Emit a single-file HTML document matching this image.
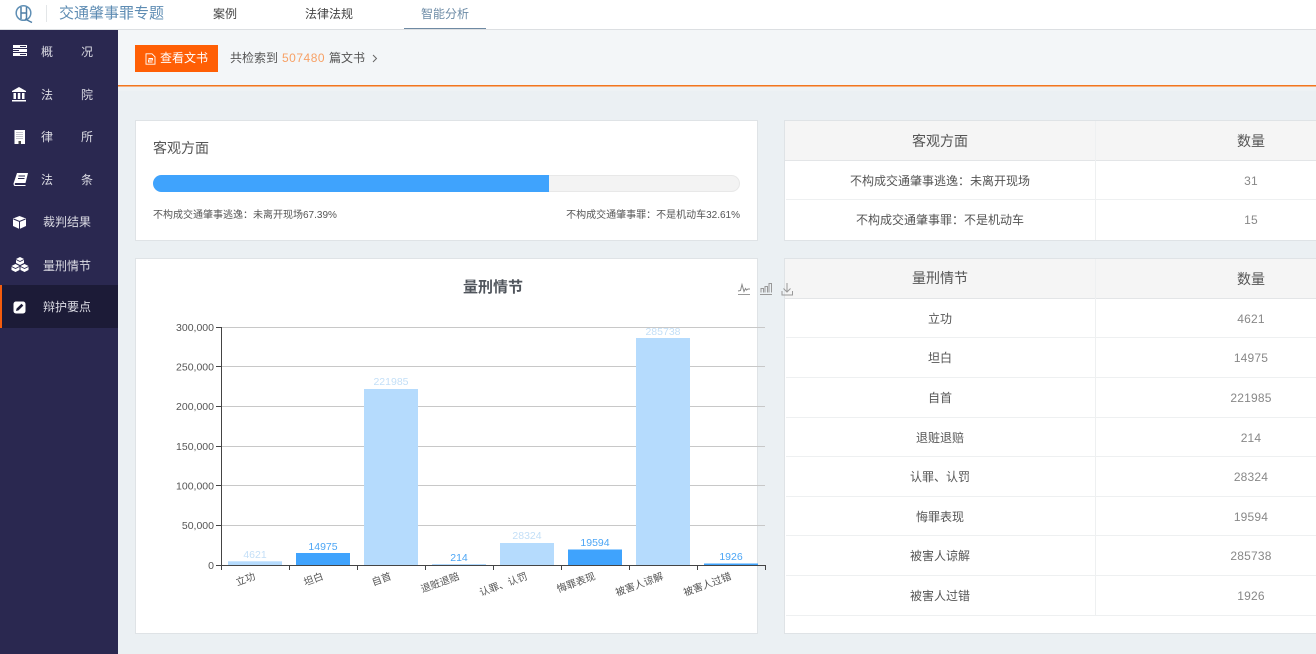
<!DOCTYPE html>
<html lang="zh"><head><meta charset="utf-8">
<style>
*{box-sizing:border-box;margin:0;padding:0}
html,body{width:1316px;height:654px;overflow:hidden;background:#ebf0f3;font-family:"Liberation Sans","Noto Sans CJK SC",sans-serif;color:#444}
.a{position:absolute;white-space:nowrap}
#page{position:relative;width:1316px;height:654px;overflow:hidden}
.nav{font-size:12px;top:6px;line-height:16px;color:#444}
.side{left:0;width:118px;height:43px;color:#dcdce4;font-size:12px}
.side svg{position:absolute;left:11px;top:12px}
.side span{position:absolute;top:13px;line-height:17px;white-space:nowrap}
.panel{background:#fff;border:1px solid #dfe3e6}
.cell{position:absolute;text-align:center;font-size:12px;line-height:16px;color:#555;white-space:nowrap}
.n{color:#888;letter-spacing:.2px}
.hd{font-size:14px;color:#555}
.line{position:absolute;height:1px;background:#eef0f1;left:786px;width:530px}
</style></head><body><div id="page">

<div class="a" style="left:0;top:0;width:1316px;height:30px;background:#fff;border-bottom:1px solid #dcdfe2"></div>
<svg class="a" style="left:14px;top:4px" width="22" height="20" viewBox="0 0 22 20"><circle cx="9.500" cy="9" r="7.300" fill="none" stroke="#5f8fb5" stroke-width="1.500"/><path d="M7 3v12M7 9h5.500M12.500 3v12M11 15l7 3.500" fill="none" stroke="#4f7ea6" stroke-width="1.500"/></svg>
<div class="a" style="left:46px;top:5px;width:1px;height:17px;background:#e3e6e8"></div>
<div class="a" style="left:59px;top:4px;font-size:15px;line-height:20px;color:#5e8cb3">交通肇事罪专题</div>
<div class="a nav" style="left:213px">案例</div>
<div class="a nav" style="left:305px">法律法规</div>
<div class="a nav" style="left:421px;color:#6c8ba6">智能分析</div>
<div class="a" style="left:404px;top:28px;width:82px;height:1px;background:#6f8aa3"></div>

<div class="a" style="left:0;top:30px;width:118px;height:624px;background:#2a2850"></div>
<div class="a side" style="top:30px"><svg style="top:14px" width="16" height="14" viewBox="0 0 16 14"><path d="M2 1h14v3H2zM2 5h14v3H2zM2 9h14v3H2z" fill="#fff"/><path d="M9 2.500h6M2 6.500h6M9 10.500h6" stroke="#2a2850"/></svg><span style="left:41px;top:14px">概</span><span style="left:81px;top:14px">况</span></div>
<div class="a side" style="top:73px"><svg style="top:13px" width="16" height="16" viewBox="0 0 16 16"><path d="M8 1L1 5v1h14V5zM2.500 7h2.500v6H2.500zM6.800 7h2.500v6H6.800zM11 7h2.500v6H11zM1 14h14v1.500H1z" fill="#fff"/></svg><span style="left:41px;top:14px">法</span><span style="left:81px;top:14px">院</span></div>
<div class="a side" style="top:116px"><svg style="left:14px;top:14px" width="12" height="15" viewBox="0 0 12 15"><path d="M.5 0h10.500v14H.5z" fill="#fff"/><path d="M2.500 2.500h6.500M2.500 4.500h6.500M2.500 6.500h6.500M2.500 8.500h6.500" stroke="#8a8a9a" stroke-dasharray="1 1"/><path d="M4.500 11h2.500v3H4.500z" fill="#444"/></svg><span style="left:41px">律</span><span style="left:81px">所</span></div>
<div class="a side" style="top:159px"><svg style="left:13px;top:13px" width="16" height="14" viewBox="0 0 16 14"><path d="M4 1h11l-2.500 10H2.500C1.500 11 1.500 13 2.500 13h10v1H2C1 14 .5 13 .5 11.500z" fill="#fff"/><path d="M5.500 4h6.500M5 6.500h6.500" stroke="#2a2850"/></svg><span style="left:41px">法</span><span style="left:81px">条</span></div>
<div class="a side" style="top:202px"><svg style="left:12px;top:13px" width="15" height="15" viewBox="0 0 15 15"><path d="M7.500 1L14 3.500v7.500L7.500 14 1 11V3.500z" fill="#fff"/><path d="M1.500 4L7.500 6.500 13.500 4M7.500 6.500V14" fill="none" stroke="#2a2850"/></svg><span style="left:43px;top:12px">裁判结果</span></div>
<div class="a side" style="top:245px"><svg width="18" height="15" viewBox="0 0 18 15" style="left:11px;top:12px"><g fill="#fff"><path d="M9 0l4 2v4l-4 2-4-2V2z"/><path d="M4.500 7l4 2v4l-4 2L.5 13V9z"/><path d="M13.500 7l4 2v4l-4 2-4-2V9z"/></g><path d="M5 2.500l4 2 4-2M.5 9.500l4 2 4-2M9.500 9.500l4 2 4-2" fill="none" stroke="#2a2850" stroke-width=".8"/></svg><span style="left:43px">量刑情节</span></div>
<div class="a" style="left:0;top:285px;width:118px;height:43px;background:#1c1b37"></div>
<div class="a" style="left:0;top:285px;width:2px;height:43px;background:#f45c0e"></div>
<div class="a side" style="top:285px"><svg style="left:13px;top:16px" width="13" height="13" viewBox="0 0 13 13"><rect x=".5" y=".5" width="12" height="12" rx="2.500" fill="#fff"/><path d="M3 10l.6-2.500L8.500 2.800l1.800 1.800L5.500 9.400z" fill="#1c1b37"/></svg><span style="left:43px;top:14px">辩护要点</span></div>

<div class="a" style="left:118px;top:30px;width:1198px;height:55px;background:#f3f6f8"></div>
<div class="a" style="left:118px;top:87px;width:1198px;height:4px;background:#eef2f4"></div>
<div class="a" style="left:118px;top:85px;width:1198px;height:1px;background:#f2761f"></div>
<div class="a" style="left:118px;top:86px;width:1198px;height:1px;background:#f3b183"></div>
<div class="a" style="left:135px;top:45px;width:83px;height:27px;background:#ff5f05"></div>
<svg class="a" style="left:145px;top:53px" width="11" height="12" viewBox="0 0 11 12"><path d="M1 .8h6l3 3V11.200H1zM3.500 5.500h4v1.500h-4v2h4" fill="none" stroke="#fff" stroke-width=".9"/></svg>
<div class="a" style="left:160px;top:50px;font-size:12px;line-height:17px;color:#fff">查看文书</div>
<div class="a" style="left:230px;top:50px;font-size:12px;line-height:16px;color:#555">共检索到</div>
<div class="a" style="left:282px;top:50px;font-size:12px;line-height:16px;color:#f7a166;letter-spacing:.5px">507480</div>
<div class="a" style="left:329px;top:50px;font-size:12px;line-height:16px;color:#555">篇文书</div>
<svg class="a" style="left:371px;top:53px" width="8" height="11" viewBox="0 0 8 11"><path d="M2 2l3.500 3.500L2 9" fill="none" stroke="#666"/></svg>

<div class="a panel" style="left:135px;top:120px;width:623px;height:121px"></div>
<div class="a" style="left:153px;top:139px;font-size:14px;line-height:18px;color:#555">客观方面</div>
<div class="a" style="left:153px;top:175px;width:587px;height:17px;border-radius:9px;background:#f3f3f3;border:1px solid #e8e8e8"></div>
<div class="a" style="left:153px;top:175px;width:396px;height:17px;border-radius:9px 0 0 9px;background:#3fa3fd"></div>
<div class="a" style="left:153px;top:209px;font-size:10px;line-height:14px;color:#555">不构成交通肇事逃逸：未离开现场67.39%</div>
<div class="a" style="right:576px;top:209px;font-size:10px;line-height:14px;color:#555">不构成交通肇事罪：不是机动车32.61%</div>

<div class="a panel" style="left:135px;top:258px;width:623px;height:376px"></div>

<div class="a panel" style="left:784px;top:120px;width:540px;height:121px"></div>
<div class="a" style="left:785px;top:121px;width:531px;height:40px;background:#f5f5f5;border-bottom:1px solid #e3e5e7"></div>
<div class="a" style="left:1095px;top:121px;width:1px;height:119px;background:#eef0f1"></div>
<div class="line" style="top:199px"></div>
<div class="cell hd" style="left:785px;width:310px;top:132px;line-height:18px">客观方面</div>
<div class="cell hd" style="left:1096px;width:310px;top:132px;line-height:18px">数量</div>
<div class="cell" style="left:785px;width:310px;top:173px">不构成交通肇事逃逸：未离开现场</div>
<div class="cell n" style="left:1096px;width:310px;top:173px">31</div>
<div class="cell" style="left:785px;width:310px;top:212px">不构成交通肇事罪：不是机动车</div>
<div class="cell n" style="left:1096px;width:310px;top:212px">15</div>

<div class="a panel" style="left:784px;top:258px;width:540px;height:376px"></div>
<div class="a" style="left:785px;top:259px;width:531px;height:40px;background:#f5f5f5;border-bottom:1px solid #e3e5e7"></div>
<div class="a" style="left:1095px;top:259px;width:1px;height:356px;background:#eef0f1"></div>
<div class="line" style="top:337px"></div><div class="line" style="top:377px"></div><div class="line" style="top:417px"></div><div class="line" style="top:456px"></div><div class="line" style="top:496px"></div><div class="line" style="top:535px"></div><div class="line" style="top:575px"></div><div class="line" style="top:615px"></div>
<div class="cell hd" style="left:785px;width:310px;top:269px;line-height:18px">量刑情节</div>
<div class="cell hd" style="left:1096px;width:310px;top:270px;line-height:18px">数量</div>
<div class="cell" style="left:785px;width:310px;top:311px">立功</div><div class="cell n" style="left:1096px;width:310px;top:311px">4621</div>
<div class="cell" style="left:785px;width:310px;top:350px">坦白</div><div class="cell n" style="left:1096px;width:310px;top:350px">14975</div>
<div class="cell" style="left:785px;width:310px;top:390px">自首</div><div class="cell n" style="left:1096px;width:310px;top:390px">221985</div>
<div class="cell" style="left:785px;width:310px;top:430px">退赃退赔</div><div class="cell n" style="left:1096px;width:310px;top:430px">214</div>
<div class="cell" style="left:785px;width:310px;top:469px">认罪、认罚</div><div class="cell n" style="left:1096px;width:310px;top:469px">28324</div>
<div class="cell" style="left:785px;width:310px;top:509px">悔罪表现</div><div class="cell n" style="left:1096px;width:310px;top:509px">19594</div>
<div class="cell" style="left:785px;width:310px;top:548px">被害人谅解</div><div class="cell n" style="left:1096px;width:310px;top:548px">285738</div>
<div class="cell" style="left:785px;width:310px;top:588px">被害人过错</div><div class="cell n" style="left:1096px;width:310px;top:588px">1926</div>

<svg class="a" style="left:135px;top:258px;overflow:visible;z-index:5" width="680" height="376" viewBox="135 258 680 376" font-family="Liberation Sans,Noto Sans CJK SC,sans-serif">
<text x="493" y="292" text-anchor="middle" font-size="15" font-weight="700" fill="#50555c">量刑情节</text>
<g fill="none" stroke="#888" stroke-width="1"><path d="M738 294.500h12" stroke="#999"/><path d="M738 291l2.500-.5 1.500-6 2 7 1.500-3 1 1.500 1.500-1h2"/><path d="M760 294.500h12M761 292.500v-4h2.500v4M765 292.500v-6h2.500v6M769 292.500v-9h2.500v9" stroke="#999"/><path d="M787 283v9M783.500 288.500l3.500 3.500 3.500-3.500M782 291v4h10.500v-4" stroke="#999"/></g>
<g stroke="#c8c8c8"><path d="M222 327.500h543M222 366.500h543M222 406.500h543M222 446.500h543M222 485.500h543M222 525.500h543"/></g>
<g fill="#b5dbfd"><rect x="228" y="561.300" width="54" height="3.700"/><rect x="364" y="389" width="54" height="176"/><rect x="500" y="543" width="54" height="22"/><rect x="636" y="338" width="54" height="227"/></g>
<g fill="#3fa3fd"><rect x="296" y="553" width="54" height="12"/><rect x="432" y="564.600" width="54" height=".7"/><rect x="568" y="549.500" width="54" height="15.500"/><rect x="704" y="563.500" width="54" height="1.500"/></g>
<g stroke="#444" fill="none"><path d="M221.500 327v238.500M216 327.500h6M216 366.500h6M216 406.500h6M216 446.500h6M216 485.500h6M216 525.500h6M216 565.500h549.500"/><path d="M221.500 565v5M289.500 565v5M357.500 565v5M425.500 565v5M493.500 565v5M561.500 565v5M629.500 565v5M697.500 565v5M765.500 565v5"/></g>
<g font-size="10.500" fill="#555" text-anchor="end"><text x="214" y="331">300,000</text><text x="214" y="370.500">250,000</text><text x="214" y="410">200,000</text><text x="214" y="450">150,000</text><text x="214" y="489.500">100,000</text><text x="214" y="529">50,000</text><text x="214" y="569">0</text></g>
<g font-size="10.500" text-anchor="middle"><g fill="#c3dff7"><text x="255" y="558">4621</text><text x="391" y="385">221985</text><text x="527" y="539">28324</text><text x="663" y="335">285738</text></g><g fill="#4ba5f5"><text x="323" y="550">14975</text><text x="459" y="561">214</text><text x="595" y="546">19594</text><text x="731" y="560">1926</text></g></g>
<g font-size="10" fill="#555" text-anchor="end"><text transform="translate(256 579) rotate(-20)">立功</text><text transform="translate(324 579) rotate(-20)">坦白</text><text transform="translate(392 579) rotate(-20)">自首</text><text transform="translate(460 579) rotate(-20)">退赃退赔</text><text transform="translate(528 579) rotate(-20)">认罪、认罚</text><text transform="translate(596 579) rotate(-20)">悔罪表现</text><text transform="translate(664 579) rotate(-20)">被害人谅解</text><text transform="translate(732 579) rotate(-20)">被害人过错</text></g>
</svg>

</div></body></html>
